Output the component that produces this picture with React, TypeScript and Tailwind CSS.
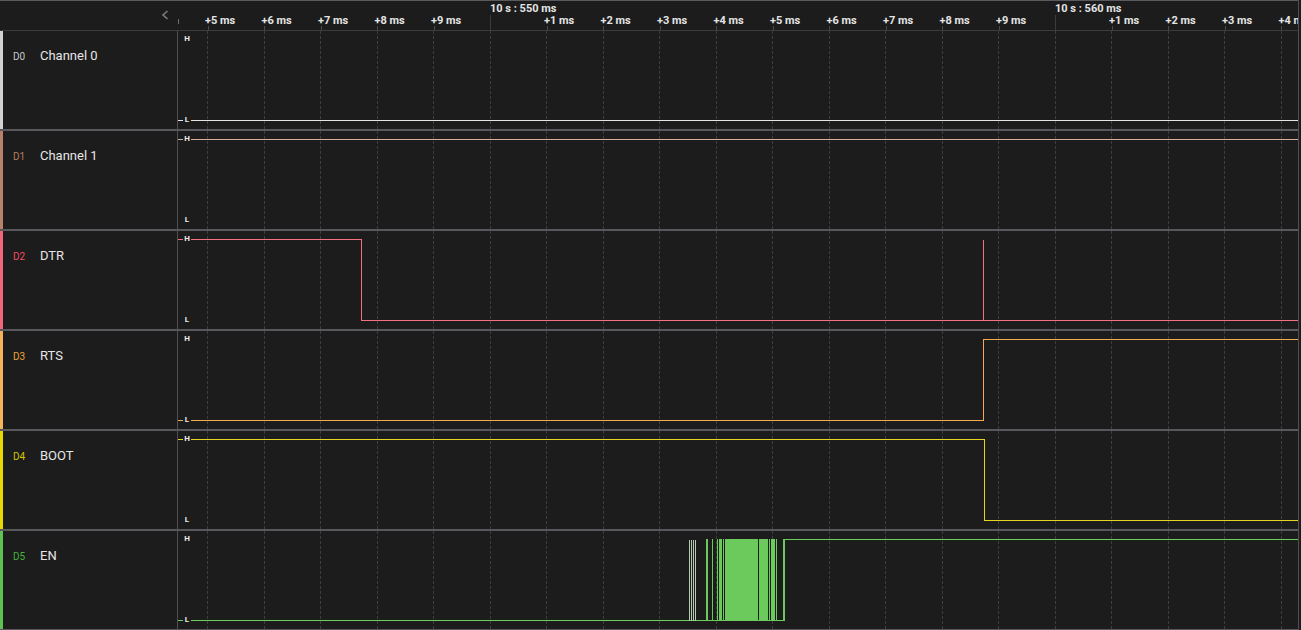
import React from 'react';

const FONT = 'Roboto, "Liberation Sans", Arial, sans-serif';
const W = 1120;
const H = 98;
const HI = 8.5;
const LO = 89.5;

type Tick = { minor: string; major?: string };
const ticks: Tick[] = [
  { minor: '+5 ms' },
  { minor: '+6 ms' },
  { minor: '+7 ms' },
  { minor: '+8 ms' },
  { minor: '+9 ms' },
  { minor: '', major: '10 s : 550 ms' },
  { minor: '+1 ms' },
  { minor: '+2 ms' },
  { minor: '+3 ms' },
  { minor: '+4 ms' },
  { minor: '+5 ms' },
  { minor: '+6 ms' },
  { minor: '+7 ms' },
  { minor: '+8 ms' },
  { minor: '+9 ms' },
  { minor: '', major: '10 s : 560 ms' },
  { minor: '+1 ms' },
  { minor: '+2 ms' },
  { minor: '+3 ms' },
  { minor: '+4 ms' },
];

const gridXs = ticks.map((_, i) => 207.5 + i * 56.5 - 178);

type Channel = {
  id: string;
  name: string;
  strip: string;
  idColor: string;
  wave: string;
  paths: string[];
};

const channels: Channel[] = [
  { id: 'D0', name: 'Channel 0', strip: '#d2d2d2', idColor: '#c8c8c8', wave: '#e4e4e4', paths: [`M0 ${LO} H${W}`] },
  { id: 'D1', name: 'Channel 1', strip: '#b8826a', idColor: '#b67c5e', wave: '#d4ae9a', paths: [`M0 ${HI} H${W}`] },
  {
    id: 'D2',
    name: 'DTR',
    strip: '#f2667c',
    idColor: '#f04c64',
    wave: '#f2707f',
    paths: [`M0 ${HI} H183.5 V${LO} H${W}`, `M805.5 ${LO} V${HI}`],
  },
  { id: 'D3', name: 'RTS', strip: '#f6b358', idColor: '#eaa43a', wave: '#f2ab4e', paths: [`M0 ${LO} H805.5 V${HI} H${W}`] },
  { id: 'D4', name: 'BOOT', strip: '#e8da00', idColor: '#d6c600', wave: '#e6d41e', paths: [`M0 ${HI} H806.5 V${LO} H${W}`] },
  { id: 'D5', name: 'EN', strip: '#5ec152', idColor: '#44b23c', wave: '#6ccc5c', paths: [`M0 ${LO} H606`, `M606 ${HI} H${W}`] },
];

const greenSegs: [number, number][] = [
  [528, 530],
  [534, 535],
  [538.5, 540],
  [541, 543.5],
  [544.5, 546],
  [546.5, 580.3],
  [581, 590],
  [591, 592],
  [593, 597],
  [598, 599],
  [604.5, 607],
];

function Wave({ ch, last }: { ch: Channel; last: boolean }) {
  return (
    <svg width={W} height={H} className="block" shapeRendering="crispEdges">
      {gridXs.map((x, i) => (
        <line key={i} x1={Math.floor(x) + 0.5} y1={0} x2={Math.floor(x) + 0.5} y2={H} stroke="#3e3e40" strokeWidth={1} strokeDasharray="3 2" />
      ))}
      {ch.paths.map((d, i) => (
        <path key={i} d={d} fill="none" stroke={ch.wave} strokeWidth={1} />
      ))}
      {last && (
        <g>
          {[511, 513, 515, 517].map((x) => (
            <line key={x} x1={x + 0.5} y1={HI} x2={x + 0.5} y2={LO} stroke="#b4ccb0" strokeWidth={1} />
          ))}
          {greenSegs.map(([a, b], i) => (
            <rect key={i} x={a} y={8} width={b - a} height={82} fill="#6cca5c" />
          ))}
        </g>
      )}
    </svg>
  );
}

function Row({ ch, last }: { ch: Channel; last: boolean }) {
  return (
    <div className="flex h-[100px] border-b-2 border-[#58585c]">
      <div className="flex w-[178px] flex-none border-r border-[#505052]">
        <div className="w-[3px] flex-none" style={{ backgroundColor: ch.strip }} />
        <div className="flex items-baseline pl-[10px] pt-[17px]">
          <span className="w-[27px] text-[10px] leading-[16px]" style={{ color: ch.idColor }}>
            {ch.id}
          </span>
          <span className="text-[13px] leading-[16px] text-[#e6e6e6]">{ch.name}</span>
        </div>
      </div>
      <div className="relative flex-1 overflow-hidden">
        <Wave ch={ch} last={last} />
        <span className="absolute left-[5px] top-[3px] flex h-[10px] w-[8px] items-center justify-center bg-[#1c1c1c] text-[8px] font-bold leading-none text-[#ececec]">
          H
        </span>
        <span className="absolute left-[5px] top-[84px] flex h-[10px] w-[8px] items-center justify-center bg-[#1c1c1c] text-[8px] font-bold leading-none text-[#ececec]">
          L
        </span>
      </div>
    </div>
  );
}

export default function App() {
  return (
    <div className="h-[630px] w-[1301px] overflow-hidden bg-[#1c1c1c]" style={{ fontFamily: FONT }}>
      <div className="w-[1299px] border-r border-[#505052]">
        <div className="flex h-[31px] border-t border-b border-t-[#5a5a5e] border-b-[#3c3c40]">
          <div className="flex w-[178px] flex-none justify-end pr-[9px] pt-[9px]">
            <svg width="8" height="10" viewBox="0 0 8 10">
              <polyline points="6.5,1 2,5 6.5,9" fill="none" stroke="#7c7c7c" strokeWidth="1.6" />
            </svg>
          </div>
          <div className="relative flex flex-1 overflow-hidden pl-[29.5px]">
            <div className="absolute left-0 top-[18px] h-[5px] border-l border-dashed border-[#6a6a6a]" />
            {ticks.map((t, i) => (
              <div key={i} className="flex h-[29px] w-[56.5px] flex-none flex-col">
                <div className="h-[14px] whitespace-nowrap pt-[2px] text-[11px] font-bold leading-[11px] text-[#e4e4e4]">
                  {t.major ?? ''}
                </div>
                {t.major ? (
                  <div className="h-[15px] border-l border-[#3c3c3e]" />
                ) : (
                  <>
                    <div className="-ml-[2.5px] h-[11px] whitespace-nowrap text-[11px] font-bold leading-[11px] text-[#e4e4e4]">
                      {t.minor}
                    </div>
                    <div className="h-[4px] border-l border-[#4a4a4c]" />
                  </>
                )}
              </div>
            ))}
          </div>
        </div>
        {channels.map((ch, i) => (
          <Row key={ch.id} ch={ch} last={i === channels.length - 1} />
        ))}
      </div>
    </div>
  );
}
